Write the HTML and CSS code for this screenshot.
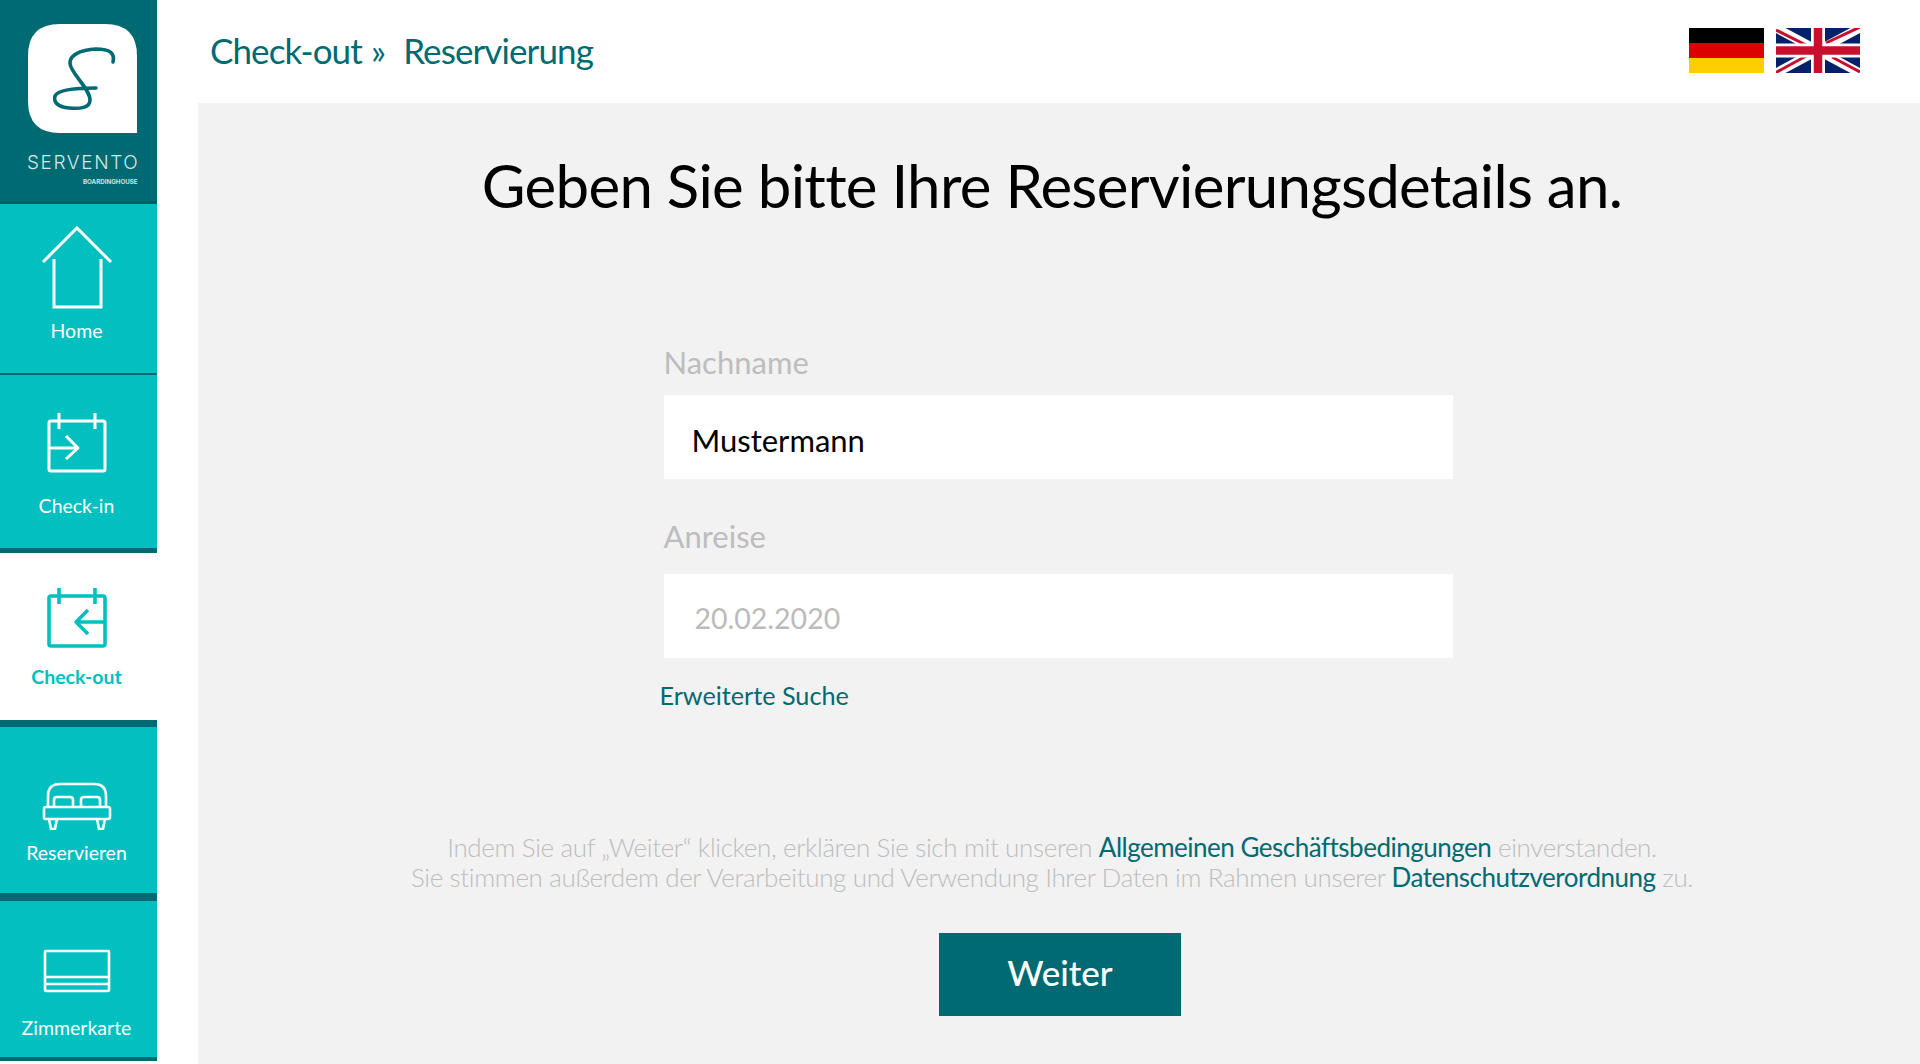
FILE: index.html
```html
<!DOCTYPE html>
<html lang="de">

<head>
    <meta charset="UTF-8">
    <meta name="viewport" content="width=device-width, initial-scale=1.0">
    <title>Servento Check-out</title>
    <link rel="stylesheet" href="styles.css">
</head>

<body>

    <div class="container">
        <div class="sidebar">
            <div class="brand">
                <svg class="brand-tile" width="109" height="109" viewBox="0 0 109 109">
                    <path d="M32 0H77Q109 0 109 32V109H32Q0 109 0 77V32Q0 0 32 0Z" fill="#fff" />
                    <path d="M85 38C87 29 82 25 68 25C52 26 42 31 42 39C42 49 62 64 62 76C62 84 52 85 41 84C31 83 25 79 27 72C30 65 50 64 68 64" fill="none" stroke="#006a72" stroke-width="3.6" stroke-linecap="round" />
                </svg>
                <div class="brand-name">SERVENTO</div>
                <div class="brand-sub">BOARDINGHOUSE</div>
            </div>

            <div class="nav-item nav-home">
                <svg width="70" height="84" viewBox="0 0 70 84" fill="none" stroke="#fff" stroke-width="3">
                    <path d="M1 36L35 2L69 36" />
                    <path d="M12 33V81H59V33" />
                </svg>
                <span>Home</span>
            </div>

            <div class="nav-item nav-checkin">
                <svg width="60" height="60" viewBox="0 0 60 60" fill="none" stroke="#fff" stroke-width="3" stroke-linejoin="round">
                    <rect x="2" y="8" width="56" height="50" rx="2" />
                    <path d="M12 0V16M48 0V16M2 35H31M19 23L31 35L19 46" />
                </svg>
                <span>Check-in</span>
            </div>

            <div class="nav-item nav-checkout">
                <svg width="60" height="60" viewBox="0 0 60 60" fill="none" stroke="#02c0c0" stroke-width="3.6" stroke-linejoin="round">
                    <rect x="2" y="8" width="56" height="50" rx="2" />
                    <path d="M12 0V16M48 0V16M58 34H29M41 22L29 34L41 46" />
                </svg>
                <span>Check-out</span>
            </div>

            <div class="nav-item nav-reserve">
                <svg width="70" height="48" viewBox="0 0 70 48" fill="none" stroke="#fff" stroke-width="2.6" stroke-linejoin="round">
                    <path d="M6 25V14Q6 2 18 2H52Q64 2 64 14V25" />
                    <path d="M12 25V18Q12 15 15 15H28Q31 15 31 18V25M39 25V18Q39 15 42 15H55Q58 15 58 18V25" />
                    <rect x="2" y="25" width="66" height="12" rx="2" />
                    <path d="M7 37L9 47H13L15 37M55 37L57 47H61L63 37" />
                </svg>
                <span>Reservieren</span>
            </div>

            <div class="nav-item nav-card">
                <svg width="68" height="44" viewBox="0 0 68 44" fill="none" stroke="#fff" stroke-width="2.6" stroke-linejoin="round">
                    <rect x="2" y="2" width="64" height="40" rx="1" />
                    <path d="M2 28H66M2 35H66" />
                </svg>
                <span>Zimmerkarte</span>
            </div>
        </div>

        <div class="main">
            <div class="topbar">
                <div class="crumbs">Check-out »&nbsp; Reservierung</div>
                <div class="flags">
                    <svg width="75" height="45" viewBox="0 0 75 45">
                        <rect width="75" height="15" fill="#000" />
                        <rect y="15" width="75" height="15" fill="#d00" />
                        <rect y="30" width="75" height="15" fill="#ffce00" />
                    </svg>
                    <svg width="84" height="45" viewBox="0 0 84 45">
                        <rect width="84" height="45" fill="#012169" />
                        <path d="M0 0L84 45M84 0L0 45" stroke="#fff" stroke-width="9" />
                        <path d="M0 2L32 18M50 15L84 -1M56 29L84 44M-1 45L32 27" stroke="#c8102e" stroke-width="3" />
                        <path d="M42 0V45M0 22.5H84" stroke="#fff" stroke-width="14" />
                        <path d="M42 0V45M0 22.5H84" stroke="#c8102e" stroke-width="8.5" />
                    </svg>
                </div>
            </div>

            <div class="panel">
                <h1>Geben Sie bitte Ihre Reservierungsdetails an.</h1>

                <div class="form">
                    <div class="field-label">Nachname</div>
                    <div class="field field-name">Mustermann</div>
                    <div class="field-label field-label-2">Anreise</div>
                    <div class="field field-date">20.02.2020</div>
                    <a class="more-link">Erweiterte Suche</a>
                </div>

                <p class="legal">
                    Indem Sie auf „Weiter“ klicken, erklären Sie sich mit unseren <a>Allgemeinen Geschäftsbedingungen</a> einverstanden.<br>
                    Sie stimmen außerdem der Verarbeitung und Verwendung Ihrer Daten im Rahmen unserer <a>Datenschutzverordnung</a> zu.
                </p>

                <div class="next-btn">Weiter</div>
            </div>
        </div>
    </div>

</body>

</html>
```

FILE: styles.css
```css
body {
    font-family: Lato, "Noto Sans", sans-serif;
    margin: 0;
    padding: 0;
    background-color: #fff;
}

.container {
    display: flex;
    height: 1064px;
    overflow: hidden;
}

/* left column */
.sidebar {
    width: 157px;
    flex-shrink: 0;
    margin-right: 41px;
}

.brand {
    border-bottom: 3px solid #005e66;
    background-color: #006a72;
    padding-top: 24px;
    height: 177px;
    display: flex;
    flex-direction: column;
}

.brand-tile {
    margin-left: 28px;
}

.brand-name {
    margin: 19px 0 0 27px;
    color: #d5e8ea;
    font-family: Inter, sans-serif;
    font-size: 19px;
    font-weight: 300;
    letter-spacing: 1.6px;
    line-height: 22px;
}

.brand-sub {
    margin: 4px 0 0 83px;
    color: #cfe3e5;
    font-family: Inter, sans-serif;
    font-size: 6.2px;
    font-weight: 700;
    line-height: 7px;
}

.nav-item {
    display: flex;
    flex-direction: column;
    align-items: center;
    padding-right: 4px;
    box-sizing: border-box;
    background-color: #02c0c0;
    border-bottom: solid #006a72;
    color: #fff;
    font-size: 19.5px;
    line-height: 24px;
}

.nav-item svg {
    display: block;
    margin-left: 1px;
}

.nav-home {
    height: 171px;
    padding-top: 22px;
    border-bottom-width: 2px;
}

.nav-home span {
    margin-top: 9px;
}

.nav-checkin {
    height: 178px;
    padding-top: 38px;
    border-bottom-width: 5px;
}

.nav-checkin span {
    margin-top: 21px;
}

.nav-checkout {
    height: 174px;
    padding-top: 35px;
    background-color: #fff;
    border-bottom-width: 7px;
    color: #02c0c0;
    font-weight: 700;
}

.nav-checkout span {
    margin-top: 17px;
}

.nav-reserve {
    height: 174px;
    padding-top: 55px;
    border-bottom-width: 8px;
}

.nav-reserve span {
    margin-top: 11px;
}

.nav-card {
    height: 160px;
    padding-top: 48px;
    border-bottom-width: 4px;
}

.nav-card span {
    margin-top: 23px;
}

/* right column */
.main {
    flex: 1;
    display: flex;
    flex-direction: column;
}

.topbar {
    height: 103px;
    flex-shrink: 0;
    display: flex;
    justify-content: space-between;
    align-items: flex-start;
    padding: 0 60px 0 12px;
}

.crumbs {
    margin-top: 28px;
    color: #006a72;
    font-size: 35px;
    letter-spacing: -0.9px;
    word-spacing: 1px;
    line-height: 44px;
}

.flags {
    display: flex;
    gap: 12px;
    padding-top: 28px;
}

.panel {
    flex: 1;
    background-color: #f2f2f2;
    display: flex;
    flex-direction: column;
    align-items: center;
}

h1 {
    margin: 42px 14px 0 0;
    color: #000;
    font-size: 60px;
    font-weight: 400;
    letter-spacing: -0.7px;
    line-height: 80px;
}

.form {
    width: 789px;
    margin-top: 117px;
    margin-right: 2px;
}

.field-label {
    color: #bdbdbd;
    font-size: 31px;
    line-height: 40px;
    height: 53px;
}

.field-label-2 {
    margin-top: 37px;
    height: 58px;
}

.field {
    height: 84px;
    background-color: #fff;
    padding-left: 28px;
    font-size: 31px;
    line-height: 90px;
}

.field-name {
    color: #000;
}

.field-date {
    padding-left: 31px;
    color: #bbb;
    font-size: 28.5px;
    line-height: 88px;
}

.more-link {
    display: block;
    margin: 20px 0 0 -4px;
    color: #006a72;
    font-size: 25.2px;
    line-height: 34px;
}

.legal {
    margin: 120px 14px 0 0;
    color: #bdbdbd;
    font-size: 26px;
    font-weight: 300;
    letter-spacing: -0.36px;
    line-height: 30px;
    text-align: center;
}

.legal a {
    color: #006a72;
    font-weight: 400;
    letter-spacing: -0.5px;
}

.next-btn {
    width: 242px;
    height: 83px;
    margin-top: 41px;
    margin-left: 2px;
    background-color: #006a72;
    color: #fff;
    font-size: 35px;
    font-weight: 500;
    line-height: 79px;
    text-align: center;
}
```
